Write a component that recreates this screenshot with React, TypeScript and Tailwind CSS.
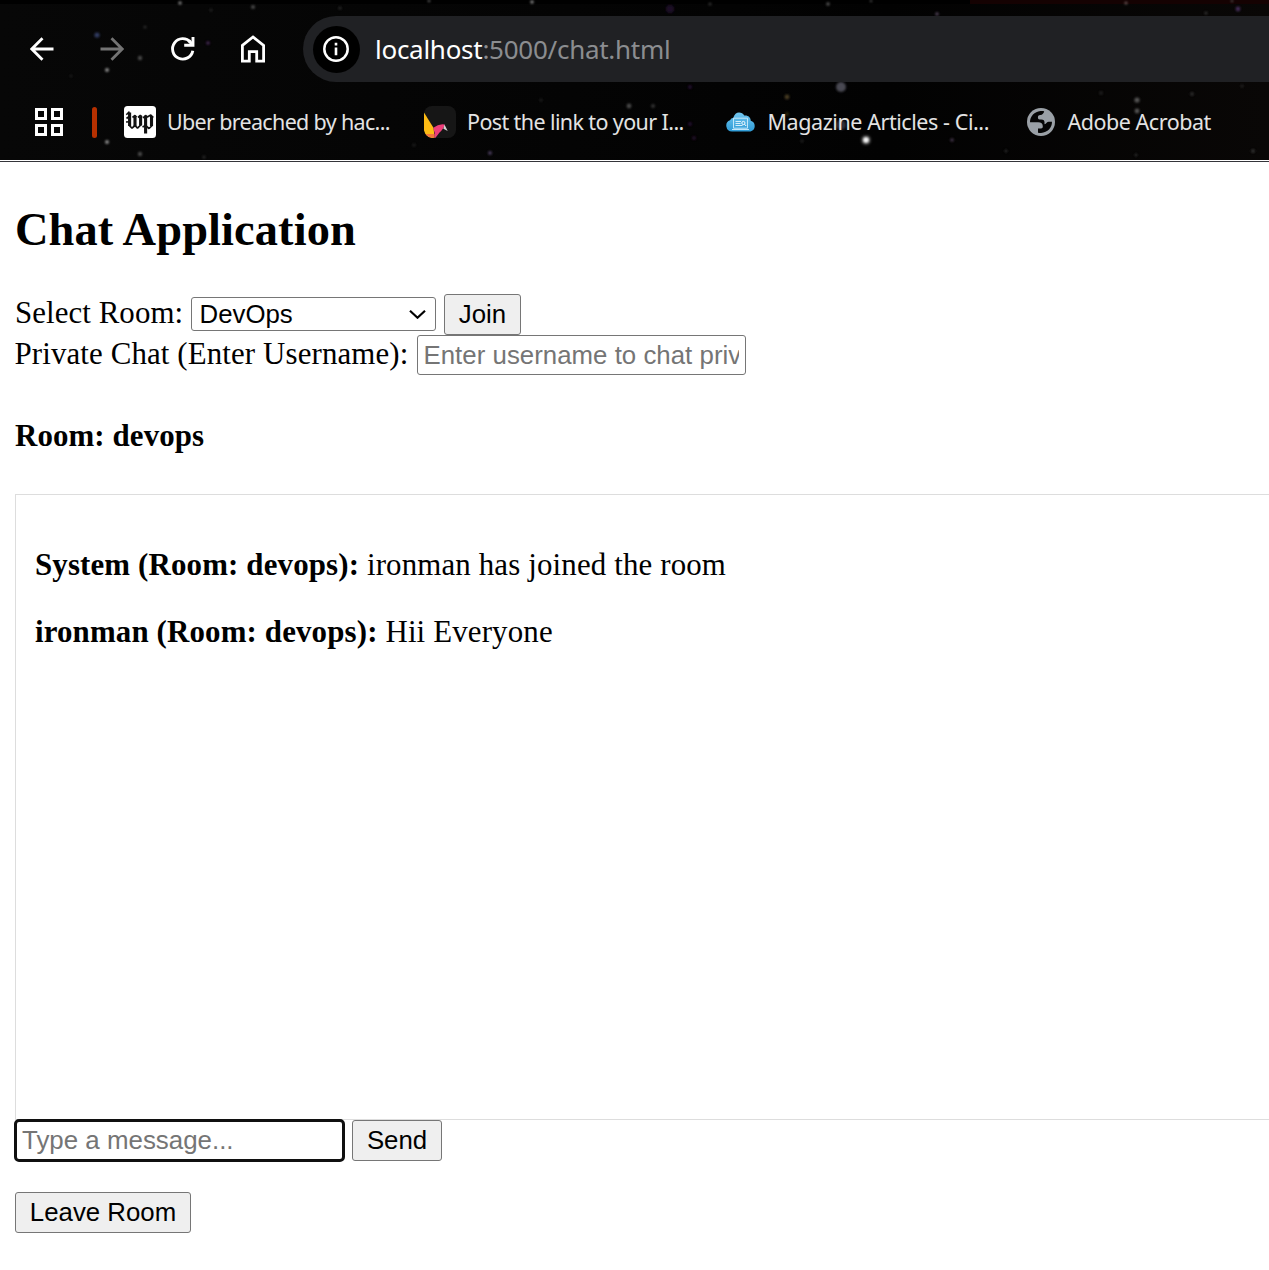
import React from "react";

type Star = [x: number, y: number, r: number, color: string, opacity: number];

const stars: Star[] = [
  [97, 35, 2.6, "#3b4a78", 0.8], [107, 70, 2, "#aaaaaa", 0.8], [140, 58, 2.2, "#777777", 0.6],
  [208, 43, 1.8, "#4a2a5c", 0.9], [253, 7, 2, "#777777", 0.6], [180, 3, 1.8, "#999999", 0.8],
  [145, 27, 1.5, "#555555", 0.5], [107, 142, 2, "#aaaaaa", 0.8], [140, 154, 2.2, "#777777", 0.6],
  [204, 157, 1.6, "#444444", 0.6], [71, 76, 1.2, "#444444", 0.5], [211, 10, 1.5, "#333333", 0.7],
  [340, 8, 1.6, "#333333", 0.8], [429, 1, 1.3, "#888888", 0.7], [532, 2, 1.7, "#aaaaaa", 0.8],
  [670, 9, 4, "#1c0a26", 1], [629, 106, 2.4, "#777777", 0.6], [653, 106, 2, "#555555", 0.6],
  [490, 153, 2, "#4e4160", 0.9], [541, 100, 1.5, "#333333", 0.6], [414, 145, 1.6, "#333333", 0.6],
  [690, 87, 1.8, "#2c1440", 0.9], [690, 124, 1.8, "#2c1440", 0.9], [694, 138, 2, "#24102f", 0.9],
  [710, 4, 1.5, "#555555", 0.6], [828, 4, 1.8, "#777777", 0.7], [871, 1, 1.3, "#777777", 0.6],
  [937, 14, 1.8, "#5a4a62", 0.9], [841, 87, 5, "#51515c", 0.9], [841, 125, 5, "#36363f", 0.9],
  [787, 97, 2.4, "#5a4b2c", 0.8], [787, 114, 2, "#4a4010", 0.6], [866, 140, 5.2, "#777777", 0.45],
  [866, 140, 3, "#ffffff", 0.95], [952, 140, 1.8, "#4c3a52", 0.9], [802, 141, 1.5, "#333333", 0.7],
  [1126, 3, 1.6, "#887777", 0.7], [1238, 9, 2.4, "#4b3060", 0.9], [1206, 13, 1.6, "#444444", 0.7],
  [1232, 1, 1.3, "#777777", 0.6], [1137, 100, 2.6, "#777777", 0.7], [1137, 111, 2.4, "#777777", 0.7],
  [1192, 94, 2, "#333333", 0.8], [1101, 93, 1.8, "#333333", 0.7], [1253, 151, 2, "#333333", 0.9],
  [1006, 151, 1.8, "#2a2a2a", 0.8], [1136, 155, 1.8, "#2a2a2a", 0.8], [1242, 86, 1.5, "#333333", 0.7],
];

function StarField() {
  return (
    <svg className="absolute inset-0" width="1269" height="160" aria-hidden="true">
      <defs>
        <linearGradient id="sky">
          <stop offset="0" stopColor="#070707" />
          <stop offset="0.45" stopColor="#040404" />
          <stop offset="0.7" stopColor="#020202" />
          <stop offset="1" stopColor="#090706" />
        </linearGradient>
        <filter id="glow" x="-50%" y="-50%" width="200%" height="200%">
          <feGaussianBlur stdDeviation="0.8" />
        </filter>
      </defs>
      <rect width="1269" height="160" fill="url(#sky)" />
      <rect width="1269" height="4" fill="#000" />
      <rect x="970" width="299" height="4" fill="#150202" />
      {stars.map(([x, y, r, color, opacity], i) => (
        <circle key={i} cx={x} cy={y} r={r} fill={color} opacity={opacity} filter="url(#glow)" />
      ))}
    </svg>
  );
}

function Arrow({ className }: { className: string }) {
  return (
    <svg className={className} width="24" height="24" viewBox="0 0 24 24" fill="none" stroke="currentColor" strokeWidth="2.8">
      <path d="M23.5 12H2M12.5 1.2 1.8 12l10.7 10.8" />
    </svg>
  );
}

function Reload() {
  return (
    <svg className="ml-[47px] overflow-visible" width="24" height="24" viewBox="0 0 24 24" fill="none" stroke="#fff" strokeWidth="2.9">
      <path d="M19.5 5.2A10.2 10.2 0 1 0 21.800 13.700" />
      <path d="M22 0v8.300h-8.800" />
      <path d="m17.800 3.500 4 4.500" strokeWidth="3.200" />
    </svg>
  );
}

function Home() {
  return (
    <svg className="ml-[45px]" width="26" height="28" viewBox="0 0 26 28" fill="none" stroke="#fff" strokeWidth="2.8">
      <path d="M2.4 10.4 13 2l10.6 8.4v15.7h-6.9v-9.4H9.3v9.4H2.4z" />
    </svg>
  );
}

function Info() {
  return (
    <svg className="-ml-px" width="26" height="26" viewBox="0 0 26 26" fill="none">
      <circle cx="13" cy="13" r="11.7" stroke="#fff" strokeWidth="2.5" />
      <path d="M13 11.500v7.800M13 6.700v2.700" stroke="#fff" strokeWidth="2.6" />
    </svg>
  );
}

function Apps() {
  return (
    <svg width="28" height="28" viewBox="0 0 28 28" fill="none" stroke="#fff" strokeWidth="3">
      <path d="M1.5 1.5h9v9h-9zM17.5 1.5h9v9h-9zM1.5 17.5h9v9h-9zM17.5 17.5h9v9h-9z" />
    </svg>
  );
}

function PostLogo() {
  return (
    <svg width="32" height="32" viewBox="0 0 32 32">
      <rect width="32" height="32" rx="3.5" fill="#fff" />
      <g fill="none" stroke="#111" strokeLinejoin="bevel">
        <path d="M2.300 8.800 5.500 5.600M2 16l4-.3" strokeWidth="1.500" />
        <path d="M5.600 6.500v13.500M11 10.500v9.800M16.600 10.500v9" strokeWidth="3.100" />
        <path d="m5.300 19.500 2.700 2.700 3-2.700 2.500 2.700 3.700-3.700M2.500 12.500l3-2.300M8.500 11.500l2.500-2 1.500 1.500M14 11.500l2.300-2 1.700 1.500" strokeWidth="1.700" />
        <path d="M21.600 10v17.500M27.500 10v10" strokeWidth="3.100" />
        <path d="m19 12 2.500-2.500 1.800 1.500 3.500-2 2.500 2.500M18.500 21l3-1.500 3.500 3 3.200-3" strokeWidth="1.700" />
      </g>
    </svg>
  );
}

function BirdLogo() {
  return (
    <svg width="32" height="32" viewBox="0 0 32 32">
      <clipPath id="tile">
        <rect width="32" height="32" rx="8" />
      </clipPath>
      <g clipPath="url(#tile)">
        <rect width="32" height="32" fill="#161616" />
        <path d="M0 6.5 9.6 22 10.5 31.5 8 32Q2 31 0 25z" fill="#fdbb14" />
        <path d="M1.5 28H10.5V31.8H8Q4 31.5 1.5 28Z" fill="#f4773c" />
        <path d="M9.3 21.8Q15 17.3 20.8 18.5 19 24 15.5 26.5L11.5 31.8H10.5Q11.3 27 9.3 21.8Z" fill="#ee3e7a" />
        <path d="M20.4 18.5 23.7 25 19.4 22.8z" fill="#d3d3d3" />
      </g>
    </svg>
  );
}

function CloudLogo() {
  return (
    <svg width="29" height="20" viewBox="0 0 29 20">
      <defs>
        <linearGradient id="cloud" x1="0" y1="0" x2="0" y2="1">
          <stop offset="0" stopColor="#72c7f0" />
          <stop offset="1" stopColor="#2e9bd6" />
        </linearGradient>
      </defs>
      <path d="M6 19.5a5.8 5.8 0 0 1-2-11.2Q5 6 7.3 5.8C8.3 2 10.5.4 13 .4c2.3 0 4.2 1.1 5.3 3.1 3.8-.5 6.5 1.8 6.4 5.3 2.5.6 4 2.5 4 5.2 0 3.2-2.2 5.5-5.3 5.5z" fill="url(#cloud)" />
      <path d="M7.500 6.200h14v10h-14zM6 17.500h17" fill="none" stroke="#c2e7fa" strokeWidth="1" />
      <path d="M9.500 9.500H15M9.500 11.500h5M9.500 13.500h7" stroke="#e4f5fd" strokeWidth=".9" />
      <circle cx="17.400" cy="11" r="1.600" fill="none" stroke="#fff" strokeWidth=".9" />
      <path d="m18.500 12.200 1.700 1.800" stroke="#fff" />
    </svg>
  );
}

function Globe() {
  return (
    <svg width="28" height="28" viewBox="0 0 28 28">
      <circle cx="14" cy="14" r="14" fill="#9aa0a6" />
      <path d="M3 14.200C3 8.300 7.500 3.600 13.500 3c1.200-.1 2.500 0 3.700.3-.5 2-1.700 3.600-3.900 3.800-2 .2-2.300 1-2.400 2.300-.1 1.800 1.200 2 3.300 2 2.500 0 3.300 1.200 3.300 3.100v1.700c2-.3 2.300-2.400 4.300-2.400h3.200C25 19.600 20.700 24.600 14 25c-1 0-2-.1-3-.3v-4.200h3c1.300 0 1.800-.8 1.800-2.200 0-2.700-1.600-4.100-4.600-4.100z" fill="#050505" />
    </svg>
  );
}

const bookmarks = [
  { label: "Uber breached by hac...", icon: <PostLogo />, box: "w-[299.5px]", text: "ml-[11px] tracking-[-0.67px]" },
  { label: "Post the link to your I...", icon: <BirdLogo />, box: "w-[302.5px]", text: "ml-[11.5px] tracking-[-0.61px]" },
  { label: "Magazine Articles - Ci...", icon: <CloudLogo />, box: "w-[301px]", text: "ml-[12.5px] tracking-[-0.43px]" },
  { label: "Adobe Acrobat", icon: <Globe />, box: "w-[220px]", text: "ml-[12.5px] tracking-[-0.47px]" },
];

function BrowserBar() {
  return (
    <header className="relative h-[162px] border-b border-[#35353a] bg-white">
      <StarField />
      <div className="relative flex h-[82px] items-center pt-4 pl-[30px]">
        <Arrow className="text-white" />
        <Arrow className="ml-[46px] rotate-180 text-[#747474]" />
        <Reload />
        <Home />
        <div className="ml-[37px] flex h-[66px] flex-1 items-center rounded-l-full bg-[#202124] pl-[10px]">
          <div className="flex size-[47px] items-center justify-center rounded-full bg-black">
            <Info />
          </div>
          <span className="ml-[15px] text-[26px] tracking-[-0.27px] text-[#8b8d90]">
            <span className="text-white">localhost</span>:5000/chat.html
          </span>
        </div>
      </div>
      <nav className="relative flex h-[78px] items-center pt-[2px] pl-[35px] text-[21.5px] text-[#e3e3e3]">
        <Apps />
        <div className="mr-[27px] ml-[29px] h-[31px] w-[5px] rounded-full bg-[#b63000]" />
        {bookmarks.map((b) => (
          <a key={b.label} className={`flex shrink-0 items-center whitespace-nowrap ${b.box}`}>
            {b.icon}
            <span className={b.text}>{b.label}</span>
          </a>
        ))}
      </nav>
    </header>
  );
}

const control = "rounded-[3px] border border-[#767676] font-['Liberation_Sans',Arial,sans-serif] text-[25.8px] tracking-normal";
const button = "flex h-[41px] items-center justify-center bg-[#efefef] leading-[39px]";

const messages = [
  { from: "System (Room: devops):", text: "ironman has joined the room" },
  { from: "ironman (Room: devops):", text: "Hii Everyone" },
];

export default function App() {
  return (
    <div className="h-[1270px] w-[1269px] overflow-hidden bg-white font-['Noto_Sans',sans-serif]">
      <BrowserBar />
      <main className="pl-[15px] font-['Liberation_Serif','Times_New_Roman',serif] text-[30.9px] leading-[38px] text-black">
        <h2 className="pt-[42px] text-[46.4px] leading-[52px] font-bold tracking-[0.12px]">Chat Application</h2>
        <div className="mt-[38px] flex h-[41px] items-start">
          <label className="w-[176px] tracking-[0.07px] whitespace-nowrap">Select Room:</label>
          <div className={`mt-[3px] flex h-[34px] w-[245px] items-center justify-between pr-[9px] pl-2 leading-[32px] ${control}`}>
            <span className="-ml-px pl-[0.5px]">DevOps</span>
            <svg width="17" height="9" viewBox="0 0 17 9" fill="none" stroke="#000" strokeWidth="2.200">
              <path d="m1 .8 7.500 6.900L16 .8" />
            </svg>
          </div>
          <button className={`ml-2 w-[77px] ${button} ${control}`}>Join</button>
        </div>
        <div className="flex h-[41px] items-start">
          <label className="-ml-[0.5px] w-[402.5px] tracking-[0.12px] whitespace-nowrap">Private Chat (Enter Username):</label>
          <input
            className={`h-[40px] w-[329px] bg-white pr-[6px] pl-[5.5px] placeholder:tracking-[0.03px] placeholder:text-[#757575] ${control}`}
            placeholder="Enter username to chat privately"
          />
        </div>
        <h4 className="mt-[42px] leading-[36px] font-bold tracking-[0.1px]">Room: devops</h4>
        <section className="mt-[40px] flex h-[626px] w-[1300px] flex-col gap-[31px] border border-[#dddddd] pt-[52px] pl-[19px]">
          {messages.map((m) => (
            <p key={m.from} className="leading-[36px] tracking-[0.145px]">
              <b>{m.from}</b> {m.text}
            </p>
          ))}
        </section>
        <div className="flex h-[41px]">
          <input
            className="-mt-px -ml-px h-[43px] w-[331px] rounded-[5px] border-[3px] border-[#101010] bg-white px-[5px] font-['Liberation_Sans',Arial,sans-serif] text-[25.9px] placeholder:text-[#757575]"
            placeholder="Type a message..."
          />
          <button className={`ml-[7px] w-[90px] ${button} ${control}`}>Send</button>
        </div>
        <button className={`mt-[31px] w-[176px] ${button} ${control}`}>Leave Room</button>
      </main>
    </div>
  );
}
